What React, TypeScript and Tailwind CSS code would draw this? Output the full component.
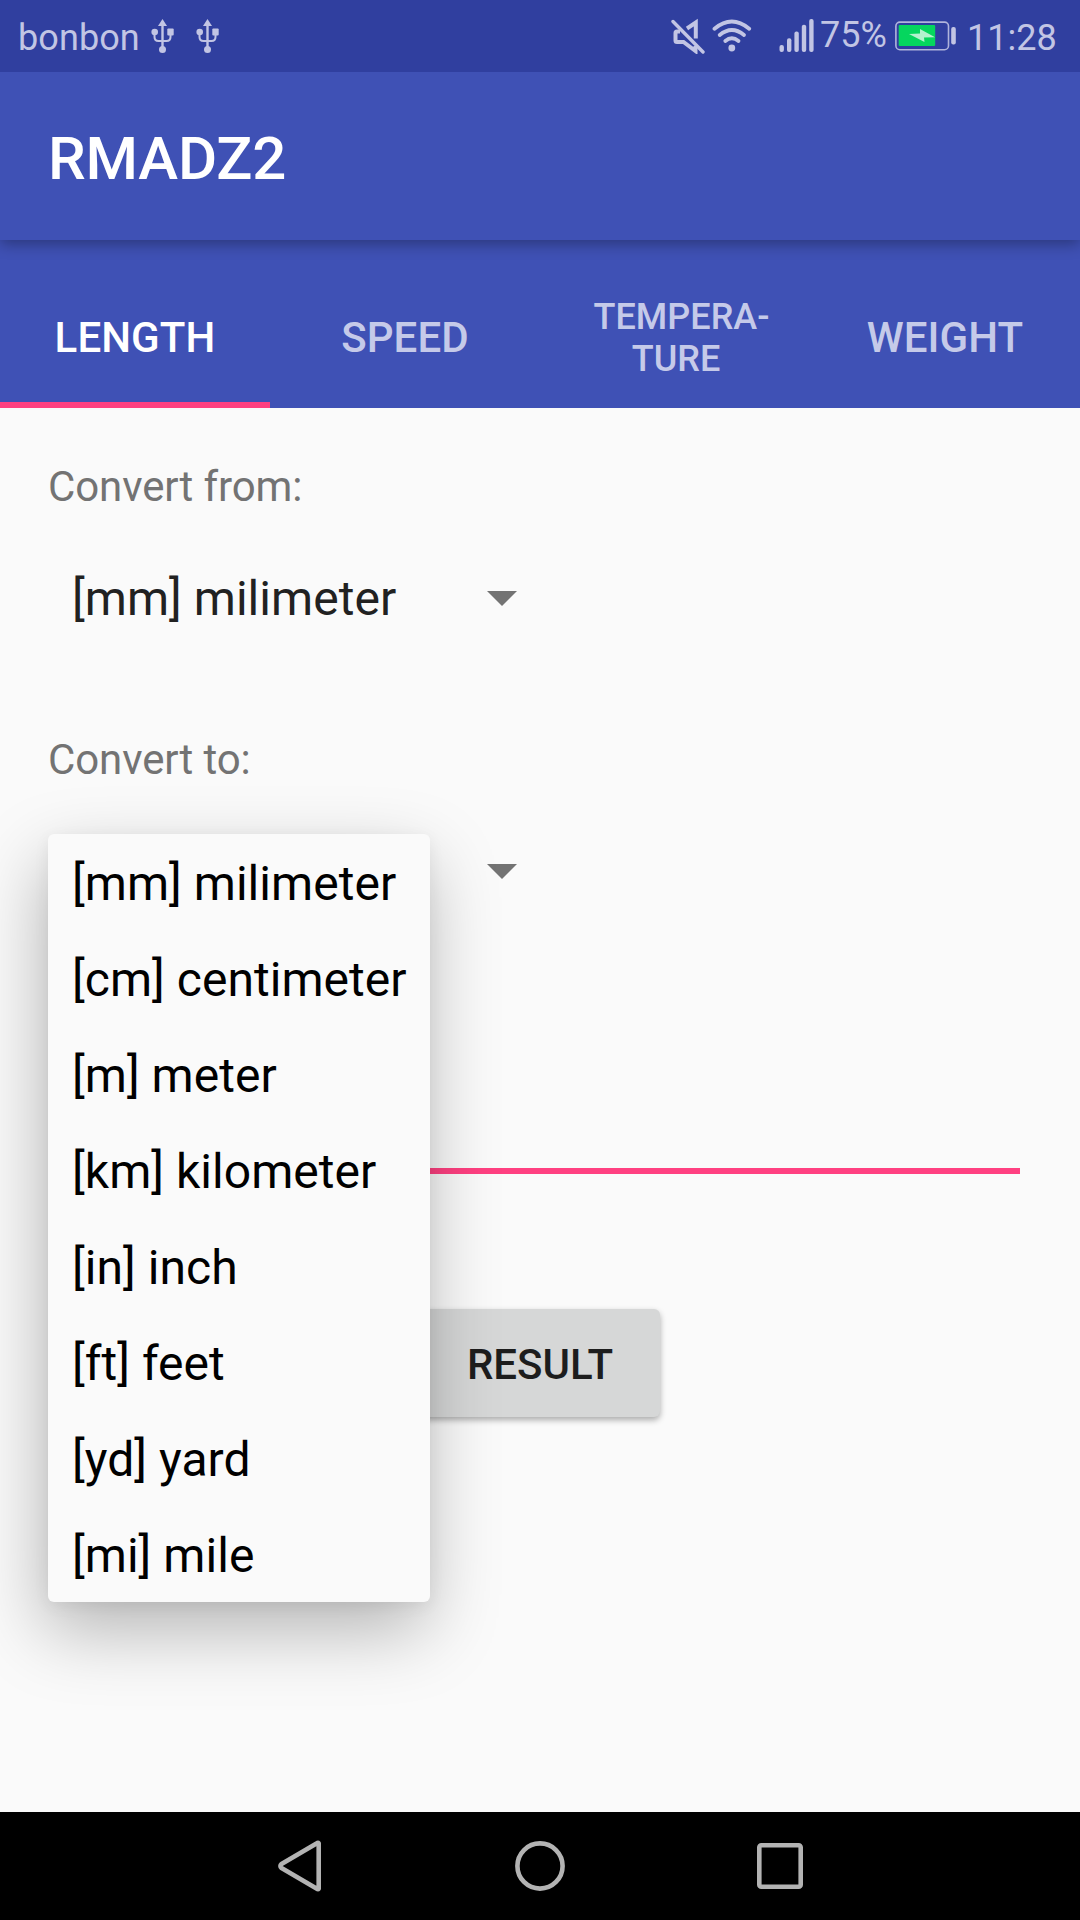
import React from "react";

const UNITS = [
  "[mm] milimeter",
  "[cm] centimeter",
  "[m] meter",
  "[km] kilometer",
  "[in] inch",
  "[ft] feet",
  "[yd] yard",
  "[mi] mile",
];

const TABS = ["LENGTH", "SPEED", "TEMPERA-TURE", "WEIGHT"];

function UsbIcon() {
  return (
    <svg width="24" height="36" viewBox="0 0 24 36" fill="none" className="block shrink-0">
      <path d="M11.5 6V30" stroke="#c2c5e4" strokeWidth="2.4" />
      <path d="M11.5 1L16 8H7Z" fill="#c2c5e4" />
      <path d="M3.5 15V19Q3.5 23 7.5 23H15.5Q19.5 23 19.5 19V15" stroke="#c2c5e4" strokeWidth="2" />
      <circle cx="3.7" cy="14" r="3.3" fill="#c2c5e4" />
      <rect x="16.3" y="10.5" width="6.4" height="7" rx="1" fill="#c2c5e4" />
      <circle cx="11.5" cy="31.5" r="3.5" fill="#c2c5e4" />
    </svg>
  );
}

function MuteIcon() {
  return (
    <svg width="34" height="36" viewBox="0 0 34 36" fill="none" stroke="#c2c5e4" className="block shrink-0">
      <path d="M2 3.5L32 34" strokeWidth="3.4" strokeLinecap="round" />
      <path d="M9 13.5H6Q4.5 13.5 4.5 15V22.5Q4.5 24 6 24H12.5L24.5 33V28" strokeWidth="4" />
      <path d="M16 10.5L24.8 4.5V20.5" strokeWidth="4" />
    </svg>
  );
}

function WifiIcon() {
  return (
    <svg width="40" height="36" viewBox="0 0 40 36" fill="none" stroke="#c2c5e4" strokeWidth="3.8" strokeLinecap="round" className="block shrink-0">
      <path d="M2.5 10.7Q19.8 -3.7 37.2 10.7" />
      <path d="M7.7 17Q19.8 7 32 17" />
      <path d="M13.3 23Q19.8 17.5 26.5 23" />
      <circle cx="19.8" cy="30" r="3.4" fill="#c2c5e4" stroke="none" />
    </svg>
  );
}

function SignalIcon() {
  return (
    <svg width="36" height="36" viewBox="0 0 36 36" fill="#c2c5e4" className="block shrink-0">
      <rect x="0.5" y="28" width="4.4" height="7" rx="2" />
      <rect x="8" y="21.2" width="4.4" height="13.8" rx="2" />
      <rect x="15.4" y="14.6" width="4.4" height="20.4" rx="2" />
      <rect x="22.8" y="7.8" width="4.4" height="27.2" rx="2" />
      <rect x="30.2" y="2" width="4.4" height="33" rx="2" />
    </svg>
  );
}

function BatteryIcon() {
  return (
    <svg width="62" height="30" viewBox="0 0 62 30" fill="none" className="block shrink-0">
      <rect x="0.9" y="1.1" width="52.6" height="27.6" rx="4" stroke="#b0b4dc" strokeWidth="1.6" />
      <rect x="3.7" y="4" width="36.5" height="21" rx="1" fill="#05d65e" />
      <path d="M14 13L25 12.6V8L40 16.3L29 16.6L29.5 21Z" fill="#b4f2cf" />
      <rect x="56.2" y="6" width="4.6" height="17.5" rx="2" fill="#c2c5e4" />
    </svg>
  );
}

function StatusBar() {
  return (
    <header className="relative z-20 flex h-[72px] items-start justify-between bg-[#303f9f] pr-[25px] pl-[18px] text-[36px] leading-[42px] text-[#c2c5e4]">
      <div className="flex items-start">
        <span className="w-[133px] pt-[17px] tracking-[0.1px]">bonbon</span>
        <div className="flex gap-[21px] pt-[18px]">
          <UsbIcon />
          <UsbIcon />
        </div>
      </div>
      <div className="flex items-start">
        <div className="flex pt-[18px]">
          <MuteIcon />
          <div className="ml-[7px]">
            <WifiIcon />
          </div>
          <div className="ml-[27px] -mt-px">
            <SignalIcon />
          </div>
        </div>
        <span className="ml-[5px] w-[75px] pt-[14px]">75%</span>
        <div className="pt-[21px]">
          <BatteryIcon />
        </div>
        <span className="ml-[10px] w-[88px] pt-[17px]">11:28</span>
      </div>
    </header>
  );
}

function Tabs() {
  return (
    <nav className="grid h-[168px] grid-cols-4 bg-[#3f51b5] pt-6">
      {TABS.map((t, i) => (
        <button
          key={t}
          className={
            i === 0
              ? "flex items-center justify-center border-b-[6px] border-[#ff4081] pt-[9px] text-[42px] leading-[48px] font-medium text-white"
              : "flex items-center justify-center pt-[3px] text-[42px] leading-[48px] font-medium text-[#c5cae9]"
          }
        >
          {i === 2 ? (
            <span className="text-center text-[36px] leading-[42px]">
              <span className="block pl-[13px]">TEMPERA-</span>
              <span className="block pl-[2px]">TURE</span>
            </span>
          ) : (
            <span className="tracking-[0.1px]">{t}</span>
          )}
        </button>
      ))}
    </nav>
  );
}

function Spinner({ value }: { value: string }) {
  return (
    <div className="flex h-[72px] w-[469px] items-center justify-between pl-6 text-[48px] leading-[72px] tracking-[0.04px] text-[#212121]">
      <span className="pt-px">{value}</span>
      <svg width="30" height="15" viewBox="0 0 30 15" className="block">
        <path d="M0 0H30L15 15Z" fill="#737373" />
      </svg>
    </div>
  );
}

function UnitMenu() {
  return (
    <ul className="absolute top-[-1px] left-0 z-20 w-[382px] rounded-[6px] bg-[#fafafa] shadow-[-4px_28px_72px_0_rgba(0,0,0,0.28),0_4px_16px_0_rgba(0,0,0,0.06)]">
      {UNITS.map((u) => (
        <li key={u} className="h-24 pt-[3px] pl-6 text-[48px] leading-[93px] tracking-[0.04px] whitespace-nowrap text-black">
          {u}
        </li>
      ))}
    </ul>
  );
}

export default function App() {
  return (
    <div className="flex h-[1920px] w-[1080px] flex-col overflow-hidden bg-[#fafafa] font-['Roboto',sans-serif]">
      <StatusBar />
      <div className="relative z-10 flex h-[168px] items-center bg-[#3f51b5] pt-[5px] pl-12 shadow-[0_4px_14px_0_rgba(0,0,0,0.32)]">
        <h1 className="text-[60px] leading-[70px] font-medium tracking-[-0.2px] text-white">RMADZ2</h1>
      </div>
      <Tabs />
      <main className="flex flex-1 flex-col px-12 pt-[54px]">
        <p className="text-[42px] leading-[49px] tracking-[-0.1px] text-[#737373]">Convert from:</p>
        <div className="mt-[51px]">
          <Spinner value="[mm] milimeter" />
        </div>
        <p className="mt-[101px] text-[42px] leading-[49px] tracking-[-0.1px] text-[#737373]">Convert to:</p>
        <div className="relative mt-[51px]">
          <Spinner value="" />
          <UnitMenu />
        </div>
        <div className="mx-3 mt-[261px] h-[6px] bg-[#ff4081]" />
        <button className="mt-[135px] h-[108px] w-[240px] self-center rounded-[6px] bg-[#d6d7d7] pt-[3px] text-[42px] leading-[48px] font-medium text-[#1d1d1d] shadow-[0_3px_6px_0_rgba(0,0,0,0.32)]">
          RESULT
        </button>
      </main>
      <footer className="relative z-30 flex h-[108px] items-center justify-center bg-black">
        <svg width="540" height="60" viewBox="0 0 540 60" fill="none" stroke="#b3b3b3" strokeWidth="4.6" strokeLinejoin="round">
          <path d="M48.7 7.3V52.7Q48 53.5 46.5 52.5L11.5 32Q9.3 30 11.5 28L46.5 7.5Q48 6.5 48.7 7.3Z" />
          <circle cx="270" cy="30" r="22.6" />
          <rect x="489.3" y="9.3" width="41.4" height="41.4" rx="2" />
        </svg>
      </footer>
    </div>
  );
}
